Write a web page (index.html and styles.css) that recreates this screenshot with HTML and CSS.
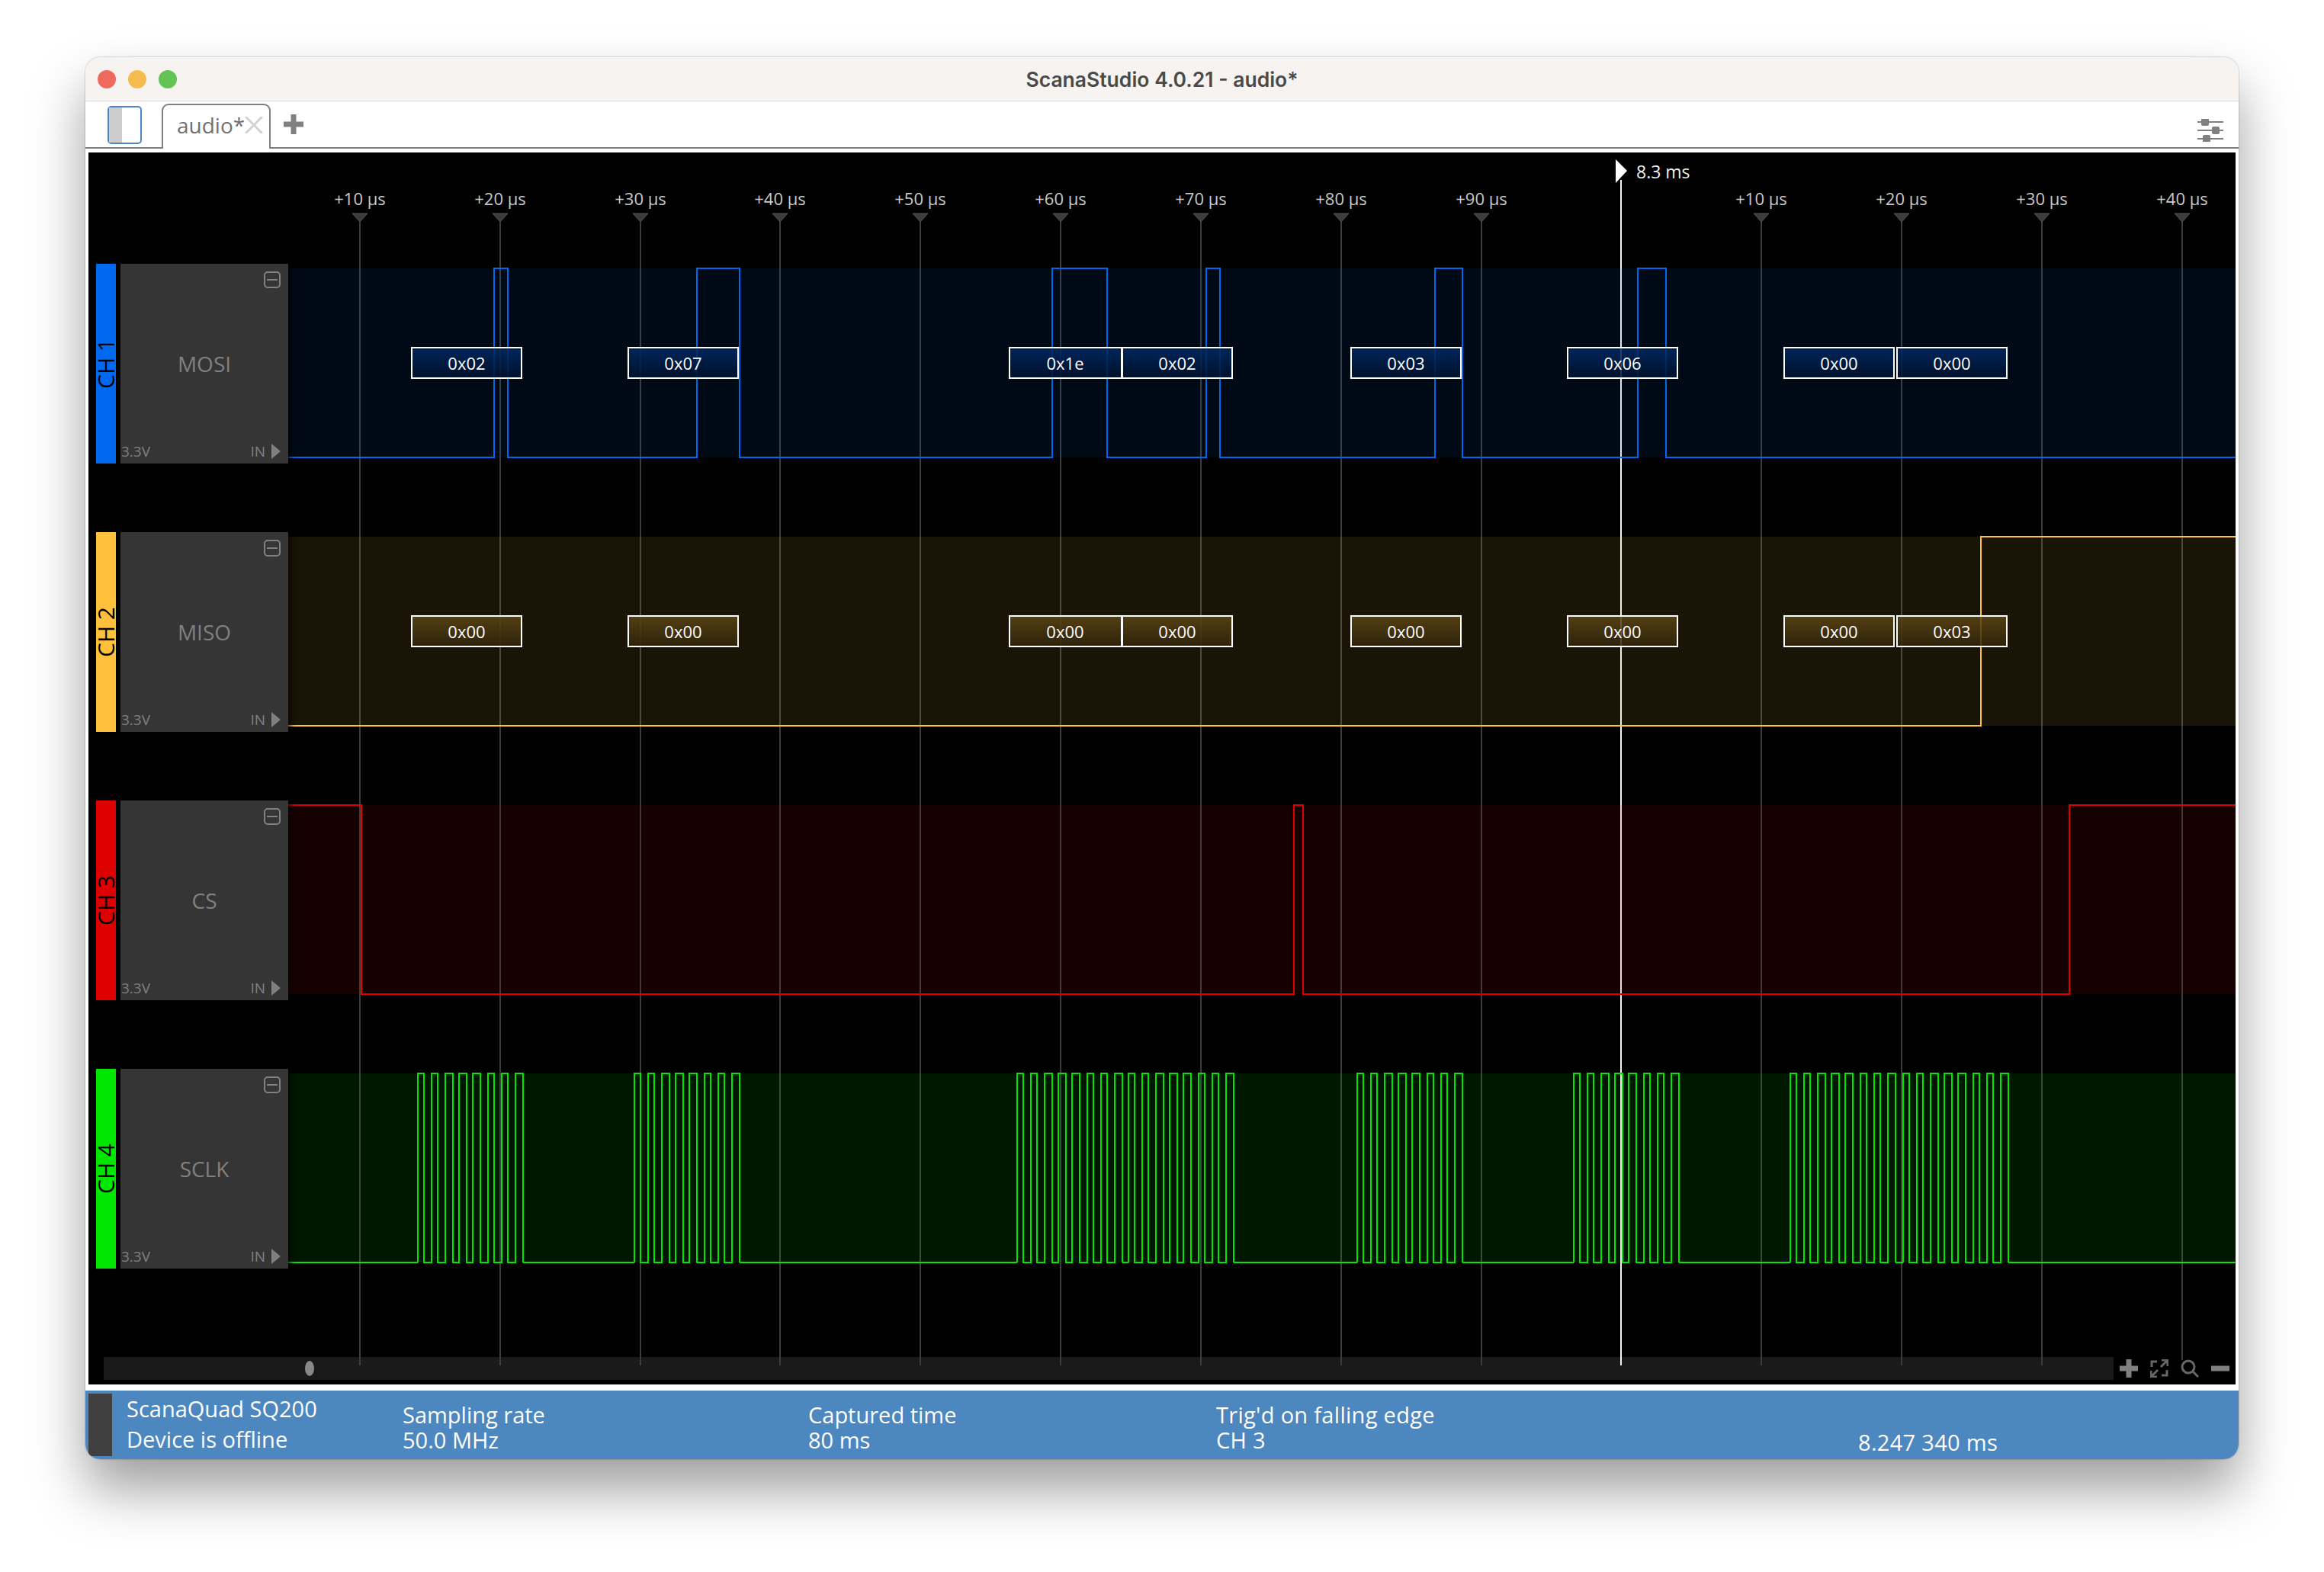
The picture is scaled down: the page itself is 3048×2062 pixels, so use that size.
FILE: index.html
```html
<!DOCTYPE html>
<html lang="en">
<head>
  <meta charset="UTF-8">
  <title>ScanaStudio 4.0.21 - audio*</title>
  <link rel="stylesheet" href="styles.css">
</head>
<body>
  <div class="window">
    <div class="titlebar">
      <div class="lights">
        <span class="light light-red"></span>
        <span class="light light-yellow"></span>
        <span class="light light-green"></span>
      </div>
      <div class="title">ScanaStudio 4.0.21 - audio*</div>
    </div>

    <div class="tabbar">
      <div class="sidebar-toggle"><span></span></div>
      <div class="tab">
        <span>audio*</span>
        <svg class="tab-close" width="24" height="22" viewBox="0 0 24 22"><path d="M1 0 L23 22 M23 0 L1 22"/></svg>
      </div>
      <svg class="tab-add" width="26" height="26" viewBox="0 0 26 26"><path d="M13 0 V26 M0 13 H26"/></svg>
      <svg class="settings" width="34" height="30" viewBox="0 0 34 30">
        <path d="M0 4 H34 M0 15 H34 M0 26 H34"/>
        <rect x="6" y="0" width="8" height="8" rx="1"/>
        <rect x="20" y="11" width="8" height="8" rx="1"/>
        <rect x="8" y="22" width="8" height="8" rx="1"/>
      </svg>
    </div>

    <div class="scope">
      <div class="channels">
        <div class="channel">
          <div class="strip strip-blue"><span>CH 1</span></div>
          <div class="panel">
            <svg class="collapse" width="22" height="22" viewBox="0 0 22 22"><rect x="1" y="1" width="20" height="20" rx="4"/><path d="M4 11 H18"/></svg>
            <div class="panel-name">MOSI</div>
            <div class="panel-foot"><span>3.3V</span><span class="panel-dir">IN<i class="dir-arrow"></i></span></div>
          </div>
          <svg class="plot" width="2554" height="262" viewBox="378 0 2554 262">
            <defs>
              <linearGradient id="pkt-blue" x1="0" y1="0" x2="0" y2="1"><stop offset="0" stop-color="#002966"/><stop offset="1" stop-color="#00122e"/></linearGradient>
              <linearGradient id="pkt-gold" x1="0" y1="0" x2="0" y2="1"><stop offset="0" stop-color="#5f4716"/><stop offset="1" stop-color="#30240b"/></linearGradient>
            </defs>
            <rect class="band band-blue" x="378" y="6" width="2554" height="248"/>
            <path class="trace trace-blue" d="M378 254 H648 V6 H666 V254 H914 V6 H970 V254 H1380 V6 H1452 V254 H1582 V6 H1600 V254 H1882 V6 H1918 V254 H2148 V6 H2185 V254 H2932"/>
            <g class="pkt pkt-blue">
              <rect x="540" y="110" width="144" height="40"/><text x="612" y="130">0x02</text>
              <rect x="824" y="110" width="144" height="40"/><text x="896" y="130">0x07</text>
              <rect x="1324" y="110" width="147" height="40"/><text x="1397" y="130">0x1e</text>
              <rect x="1472" y="110" width="144" height="40"/><text x="1544" y="130">0x02</text>
              <rect x="1772" y="110" width="144" height="40"/><text x="1844" y="130">0x03</text>
              <rect x="2056" y="110" width="144" height="40"/><text x="2128" y="130">0x06</text>
              <rect x="2340" y="110" width="144" height="40"/><text x="2412" y="130">0x00</text>
              <rect x="2488" y="110" width="144" height="40"/><text x="2560" y="130">0x00</text>
            </g>
          </svg>
        </div>

        <div class="channel">
          <div class="strip strip-gold"><span>CH 2</span></div>
          <div class="panel">
            <svg class="collapse" width="22" height="22" viewBox="0 0 22 22"><rect x="1" y="1" width="20" height="20" rx="4"/><path d="M4 11 H18"/></svg>
            <div class="panel-name">MISO</div>
            <div class="panel-foot"><span>3.3V</span><span class="panel-dir">IN<i class="dir-arrow"></i></span></div>
          </div>
          <svg class="plot" width="2554" height="262" viewBox="378 0 2554 262">
            <rect class="band band-gold" x="378" y="6" width="2554" height="248"/>
            <path class="trace trace-gold" d="M378 254 H2598 V6 H2932"/>
            <g class="pkt pkt-gold">
              <rect x="540" y="110" width="144" height="40"/><text x="612" y="130">0x00</text>
              <rect x="824" y="110" width="144" height="40"/><text x="896" y="130">0x00</text>
              <rect x="1324" y="110" width="147" height="40"/><text x="1397" y="130">0x00</text>
              <rect x="1472" y="110" width="144" height="40"/><text x="1544" y="130">0x00</text>
              <rect x="1772" y="110" width="144" height="40"/><text x="1844" y="130">0x00</text>
              <rect x="2056" y="110" width="144" height="40"/><text x="2128" y="130">0x00</text>
              <rect x="2340" y="110" width="144" height="40"/><text x="2412" y="130">0x00</text>
              <rect x="2488" y="110" width="144" height="40"/><text x="2560" y="130">0x03</text>
            </g>
          </svg>
        </div>

        <div class="channel">
          <div class="strip strip-red"><span>CH 3</span></div>
          <div class="panel">
            <svg class="collapse" width="22" height="22" viewBox="0 0 22 22"><rect x="1" y="1" width="20" height="20" rx="4"/><path d="M4 11 H18"/></svg>
            <div class="panel-name">CS</div>
            <div class="panel-foot"><span>3.3V</span><span class="panel-dir">IN<i class="dir-arrow"></i></span></div>
          </div>
          <svg class="plot" width="2554" height="262" viewBox="378 0 2554 262">
            <rect class="band band-red" x="378" y="6" width="2554" height="248"/>
            <path class="trace trace-red" d="M378 6 H474 V254 H1697 V6 H1709 V254 H2714 V6 H2932"/>
          </svg>
        </div>

        <div class="channel">
          <div class="strip strip-green"><span>CH 4</span></div>
          <div class="panel">
            <svg class="collapse" width="22" height="22" viewBox="0 0 22 22"><rect x="1" y="1" width="20" height="20" rx="4"/><path d="M4 11 H18"/></svg>
            <div class="panel-name">SCLK</div>
            <div class="panel-foot"><span>3.3V</span><span class="panel-dir">IN<i class="dir-arrow"></i></span></div>
          </div>
          <svg class="plot" width="2554" height="262" viewBox="378 0 2554 262">
            <defs>
              <!-- one byte of clock, eight pulses -->
              <path id="sck-byte" d="M0 254 V6 H8 V254 H18 V6 H26 V254 H36 V6 H46 V254 H54 V6 H64 V254 H72 V6 H82 V254 H92 V6 H100 V254 H110 V6 H118 V254 H128 V6 H138 V254"/>
            </defs>
            <rect class="band band-green" x="378" y="6" width="2554" height="248"/>
            <g class="trace trace-green">
              <path d="M378 254 H548 M686 254 H832 M970 254 H1334 M1472 254 H1480 M1618 254 H1780 M1918 254 H2064 M2202 254 H2348 M2486 254 H2496 M2634 254 H2932"/>
              <use href="#sck-byte" x="548"/>
              <use href="#sck-byte" x="832"/>
              <use href="#sck-byte" x="1334"/>
              <use href="#sck-byte" x="1480"/>
              <use href="#sck-byte" x="1780"/>
              <use href="#sck-byte" x="2064"/>
              <use href="#sck-byte" x="2348"/>
              <use href="#sck-byte" x="2496"/>
            </g>
          </svg>
        </div>
      </div>

      <div class="scrollrow">
        <div class="scrollbar"><span class="scroll-knob"></span></div>
        <div class="zoom-tools">
          <svg width="24" height="24" viewBox="0 0 24 24"><path class="tool-thick" d="M12 0 V24 M0 12 H24"/></svg>
          <svg width="24" height="24" viewBox="0 0 24 24"><path class="tool-thin" d="M2 10 V3 H9 M22 14 V21 H15 M23 1 L14 10 M15 1 H23 V9 M1 23 L10 14 M9 23 H1 V15"/></svg>
          <svg width="24" height="24" viewBox="0 0 24 24"><circle class="tool-thin" cx="10" cy="10" r="8"/><path class="tool-thin" d="M16 16 L23 23"/></svg>
          <svg width="24" height="24" viewBox="0 0 24 24"><path class="tool-thick" d="M0 12 H24"/></svg>
        </div>
      </div>

      <!-- time ruler, grid lines and cursor sit behind the channel rows -->
      <svg class="ruler" width="2816" height="1616" viewBox="116 200 2816 1616">
        <g class="grid">
          <path d="M472 291 V1791 M656 291 V1791 M840 291 V1791 M1023 291 V1791 M1207 291 V1791 M1391 291 V1791 M1575 291 V1791 M1759 291 V1791 M1943 291 V1791 M2310 291 V1791 M2494 291 V1791 M2678 291 V1791 M2862 291 V1784"/>
        </g>
        <g class="ticks">
          <path d="M462 280 H482 L472 291 Z M646 280 H666 L656 291 Z M830 280 H850 L840 291 Z M1013 280 H1033 L1023 291 Z M1197 280 H1217 L1207 291 Z M1381 280 H1401 L1391 291 Z M1565 280 H1585 L1575 291 Z M1749 280 H1769 L1759 291 Z M1933 280 H1953 L1943 291 Z M2300 280 H2320 L2310 291 Z M2484 280 H2504 L2494 291 Z M2668 280 H2688 L2678 291 Z M2852 280 H2872 L2862 291 Z"/>
        </g>
        <g class="tick-labels">
          <text x="472" y="269">+10 µs</text>
          <text x="656" y="269">+20 µs</text>
          <text x="840" y="269">+30 µs</text>
          <text x="1023" y="269">+40 µs</text>
          <text x="1207" y="269">+50 µs</text>
          <text x="1391" y="269">+60 µs</text>
          <text x="1575" y="269">+70 µs</text>
          <text x="1759" y="269">+80 µs</text>
          <text x="1943" y="269">+90 µs</text>
          <text x="2310" y="269">+10 µs</text>
          <text x="2494" y="269">+20 µs</text>
          <text x="2678" y="269">+30 µs</text>
          <text x="2862" y="269">+40 µs</text>
        </g>
        <path class="cursor-line" d="M2126 236 V1791"/>
        <path class="cursor-flag" d="M2119 209 L2134 224 L2119 240 Z"/>
        <text class="cursor-label" x="2146" y="234">8.3 ms</text>
      </svg>
    </div>

    <div class="statusbar">
      <div class="status-block"></div>
      <div class="status-device">
        <div>ScanaQuad SQ200</div>
        <div>Device is offline</div>
      </div>
      <div class="status-col status-rate">
        <div>Sampling rate</div>
        <div>50.0 MHz</div>
      </div>
      <div class="status-col status-time">
        <div>Captured time</div>
        <div>80 ms</div>
      </div>
      <div class="status-col status-trig">
        <div>Trig'd on falling edge</div>
        <div>CH 3</div>
      </div>
      <div class="status-col status-cursor">
        <div>8.247 340 ms</div>
      </div>
    </div>
  </div>
</body>
</html>
```

FILE: styles.css
```css
html, body {
  height: 100%;
}
body {
  margin: 0;
  padding: 75px 0 0 112px;
  box-sizing: border-box;
  background: #fff;
  font-family: "Open Sans", sans-serif;
}
.window {
  width: 2824px;
  height: 1839px;
  border-radius: 20px;
  background: #fff;
  box-shadow: 0 40px 70px rgba(0, 0, 0, 0.38), 0 0 2px rgba(0, 0, 0, 0.4);
  overflow: hidden;
}

/* title bar */
.titlebar {
  position: relative;
  height: 57px;
  background: #f6f3f0;
  border-bottom: 1px solid #d9d9d9;
  display: flex;
  align-items: center;
  justify-content: center;
}
.lights {
  position: absolute;
  left: 16px;
  top: 17px;
  display: flex;
  gap: 16px;
}
.light {
  width: 24px;
  height: 24px;
  border-radius: 50%;
}
.light-red { background: #ee6a5f; }
.light-yellow { background: #f5bd4f; }
.light-green { background: #61c454; }
.title {
  font-family: Inter, sans-serif;
  font-size: 26.5px;
  font-weight: 600;
  color: #4a4a4a;
}

/* tabs */
.tabbar {
  height: 62px;
  display: flex;
  align-items: flex-start;
  background: #fff;
  background-image: linear-gradient(#808080, #808080);
  background-size: 100% 2px;
  background-position: 0 60px;
  background-repeat: no-repeat;
}
.sidebar-toggle {
  width: 45px;
  height: 50px;
  margin: 6px 0 0 29px;
  box-sizing: border-box;
  border: 2px solid #4c87c0;
  border-radius: 5px;
  background: #fff;
}
.sidebar-toggle span {
  display: block;
  width: 17px;
  height: 100%;
  background: #ccc;
}
.tab {
  width: 143px;
  height: 59px;
  margin: 3px 0 0 26px;
  box-sizing: border-box;
  border: 2px solid #808080;
  border-bottom: none;
  border-radius: 9px 9px 0 0;
  background: #fff;
  display: flex;
  align-items: center;
  padding: 0 0 6px 18px;
  font-size: 28px;
  color: #707070;
}
.tab-close {
  fill: none;
  stroke: #d2d2d2;
  stroke-width: 3;
}
.tab-add {
  margin: 17px 0 0 17px;
  fill: none;
  stroke: #808080;
  stroke-width: 7;
}
.settings {
  margin: 23px 20px 0 auto;
  stroke: #808080;
  stroke-width: 2;
  fill: #808080;
}

/* scope area */
.scope {
  position: relative;
  height: 1616px;
  margin: 5px 4px 8px;
  background: #000;
  box-sizing: border-box;
  padding: 146px 0 6px 10px;
  display: flex;
  flex-direction: column;
  justify-content: space-between;
}
.channels {
  position: relative;
  z-index: 1;
  display: flex;
  flex-direction: column;
  gap: 90px;
}
.channel {
  display: flex;
  height: 262px;
}
.strip {
  width: 26px;
  margin-right: 6px;
  display: flex;
  align-items: center;
  justify-content: center;
  color: #000;
  font-size: 30px;
}
.strip span {
  writing-mode: vertical-rl;
  transform: rotate(180deg);
  line-height: 26px;
  white-space: nowrap;
}
.strip-blue { background: #0069f0; }
.strip-gold { background: #ffc13b; }
.strip-red { background: #dc0000; }
.strip-green { background: #00e600; }

.panel {
  position: relative;
  z-index: 1;
  width: 220px;
  background: #353535;
  box-shadow: 4px 0 6px rgba(0, 0, 0, 0.6);
  color: #808080;
  display: grid;
  grid-template-rows: 32px 1fr 32px;
}
.collapse {
  justify-self: end;
  margin: 10px 10px 0 0;
  fill: none;
  stroke: #808080;
  stroke-width: 2;
}
.panel-name {
  align-self: center;
  text-align: center;
  font-size: 28px;
}
.panel-foot {
  display: flex;
  justify-content: space-between;
  align-items: center;
  padding: 0 10px 0 1px;
  font-size: 19px;
}
.panel-dir {
  display: flex;
  align-items: center;
  gap: 8px;
}
.dir-arrow {
  width: 0;
  height: 0;
  border-left: 12px solid #808080;
  border-top: 10px solid transparent;
  border-bottom: 10px solid transparent;
}

/* traces */
.plot {
  display: block;
  flex: none;
}
.band-blue { fill: rgba(0, 110, 245, 0.09); }
.band-gold { fill: rgba(255, 193, 59, 0.1); }
.band-red { fill: rgba(220, 0, 0, 0.1); }
.band-green { fill: rgba(0, 230, 0, 0.1); }
.trace {
  fill: none;
  stroke-width: 2;
  shape-rendering: crispEdges;
}
.trace-blue { stroke: #0069f0; }
.trace-gold { stroke: #ffc13b; }
.trace-red { stroke: #dc0000; }
.trace-green { stroke: #00e600; }
.pkt rect {
  stroke: #fff;
  stroke-width: 2;
  fill-opacity: 0.85;
}
.pkt-blue rect { fill: url(#pkt-blue); }
.pkt-gold rect { fill: url(#pkt-gold); }
.pkt text {
  fill: #fff;
  font-size: 22px;
  text-anchor: middle;
  dominant-baseline: central;
}

/* ruler behind the rows */
.ruler {
  position: absolute;
  left: 0;
  top: 0;
}
.grid path {
  stroke: #3c3c3c;
  stroke-width: 2;
  fill: none;
}
.ticks path {
  fill: #3c3c3c;
  stroke: #555;
  stroke-width: 1;
}
.tick-labels text {
  fill: #c8c8c8;
  font-size: 22px;
  text-anchor: middle;
}
.cursor-line {
  stroke: #f4f4f4;
  stroke-width: 2;
}
.cursor-flag { fill: #fff; }
.cursor-label {
  fill: #eee;
  font-size: 23px;
}

/* scrollbar row */
.scrollrow {
  display: flex;
  align-items: center;
  padding-left: 10px;
}
.scrollbar {
  width: 2636px;
  height: 30px;
  background: #1a1a1a;
  display: flex;
  align-items: center;
  padding-left: 264px;
  box-sizing: border-box;
}
.scroll-knob {
  width: 12px;
  height: 20px;
  border-radius: 50%;
  background: #888;
}
.zoom-tools {
  display: flex;
  gap: 16px;
  margin-left: 8px;
}
.zoom-tools svg {
  position: relative;
  z-index: 2;
  display: block;
}
.tool-thick {
  fill: none;
  stroke: #808080;
  stroke-width: 7;
}
.tool-thin {
  fill: none;
  stroke: #666;
  stroke-width: 3;
}

/* status bar */
.statusbar {
  height: 90px;
  background: #4c87c0;
  color: #fff;
  display: flex;
  font-size: 29px;
  box-sizing: border-box;
  padding: 4px 0 4px 4px;
}
.status-block {
  width: 31px;
  background: #404040;
  margin-right: 19px;
}
.status-device {
  width: 362px;
  line-height: 40px;
}
.status-col {
  align-self: flex-end;
  line-height: 33px;
  padding-bottom: 5px;
}
.status-rate { width: 532px; }
.status-time { width: 535px; }
.status-trig {
  width: 842px;
  letter-spacing: 0.3px;
}
.status-cursor {
  letter-spacing: 0.3px;
  padding-bottom: 2px;
}
```
